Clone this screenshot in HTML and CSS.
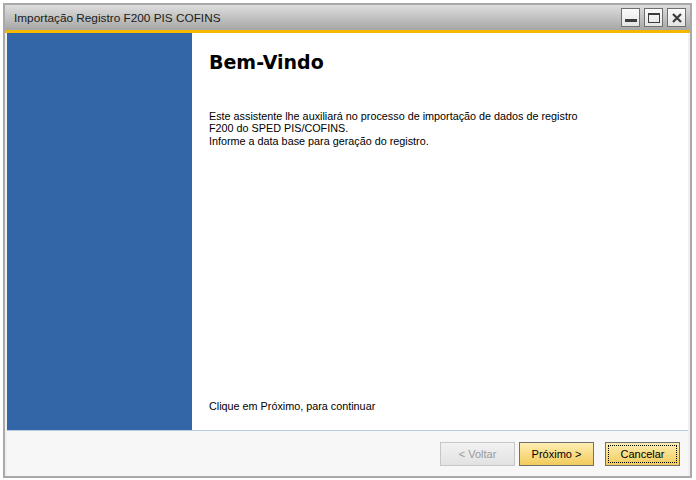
FILE: index.html
```html
<!DOCTYPE html>
<html lang="pt-BR">

<head>
    <meta charset="UTF-8">
    <title>Importação Registro F200 PIS COFINS</title>
    <link rel="stylesheet" href="styles.css">
</head>

<body>
    <div class="window">
        <div class="title-bar">
            <span class="title">Importação Registro F200 PIS COFINS</span>
            <div class="win-buttons">
                <button class="win-btn">
                    <svg width="12" height="10" viewBox="0 0 12 10"><rect x="0" y="6" width="12" height="3" fill="#3c3c3c"/></svg>
                </button>
                <button class="win-btn">
                    <svg width="12" height="10" viewBox="0 0 12 10"><rect x="0.5" y="0.5" width="11" height="9" fill="none" stroke="#3c3c3c"/><rect x="0" y="0" width="12" height="2" fill="#3c3c3c"/></svg>
                </button>
                <button class="win-btn">
                    <svg width="10" height="10" viewBox="0 0 10 10"><path d="M1 1 L9 9 M9 1 L1 9" stroke="#3c3c3c" stroke-width="2.2"/></svg>
                </button>
            </div>
        </div>
        <div class="accent"></div>
        <div class="main">
            <div class="side-panel"></div>
            <div class="content">
                <h1>Bem-Vindo</h1>
                <p class="intro">
                    Este assistente lhe auxiliará no processo de importação de dados de registro<br>
                    F200 do SPED PIS/COFINS.<br>
                    Informe a data base para geração do registro.
                </p>
                <p class="hint">Clique em Próximo, para continuar</p>
            </div>
        </div>
        <div class="footer">
            <button class="btn" disabled>&lt; Voltar</button>
            <button class="btn primary">Próximo &gt;</button>
            <button class="btn primary focused"><span>Cancelar</span></button>
        </div>
    </div>
</body>

</html>
```

FILE: styles.css
```css
body {
    margin: 0;
    background-color: #fff;
    font-family: 'Liberation Sans', Arial, sans-serif;
    font-size: 10.8px;
    color: #000;
}

.window {
    margin: 3px 0 0 3px;
    width: 685px;
    height: 471px;
    border: 2px solid #a9a9a9;
    background-color: #f0f0f0;
    display: flex;
    flex-direction: column;
}

.title-bar {
    height: 25px;
    background: linear-gradient(#dedede, #a6a6a6);
    display: flex;
    align-items: center;
    justify-content: space-between;
    padding: 0 4px 0 9px;
}

.title {
    font-size: 11.8px;
    color: #1a1a1a;
    padding-top: 1px;
}

.win-buttons {
    display: flex;
    gap: 4px;
    align-items: center;
}

.win-btn {
    width: 19px;
    height: 19px;
    padding: 0;
    border: 1px solid #6f6f6f;
    background: linear-gradient(#fbfbfb, #e4e4e4);
    display: flex;
    align-items: center;
    justify-content: center;
}

.accent {
    height: 3px;
    background-color: #f5b800;
}

.main {
    flex: 1;
    display: flex;
    margin: 0 2px;
    border-bottom: 1px solid #b8cce6;
}

.side-panel {
    width: 185px;
    background-color: #3366a6;
}

.content {
    flex: 1;
    background-color: #fff;
    padding: 0 17px;
    display: flex;
    flex-direction: column;
}

h1 {
    font-family: 'DejaVu Sans', Verdana, sans-serif;
    font-size: 19px;
    font-weight: bold;
    margin: 18px 0 0 0;
}

.intro {
    margin: 37px 0 0 0;
    line-height: 12.4px;
}

.hint {
    margin: auto 0 18px 0;
}

.footer {
    height: 45px;
    background-color: #f7f7f7;
    margin: 0 2px;
    display: flex;
    align-items: center;
    justify-content: flex-end;
    padding-right: 8px;
    gap: 4px;
}

.btn {
    width: 75px;
    height: 24px;
    font-family: 'Liberation Sans', Arial, sans-serif;
    font-size: 11px;
    border: 1px solid #707070;
    background: linear-gradient(#fdeeb0, #f2cb5c);
    color: #000;
    padding: 0;
}

.btn:disabled {
    border-color: #c6c6c6;
    background: linear-gradient(#f2f2f2, #e2e2e2);
    color: #9a9a9a;
}

.focused {
    margin-left: 7px;
    padding: 2px;
}

.focused span {
    display: block;
    height: 100%;
    border: 1px dotted #000;
    box-sizing: border-box;
    line-height: 16px;
}
```
